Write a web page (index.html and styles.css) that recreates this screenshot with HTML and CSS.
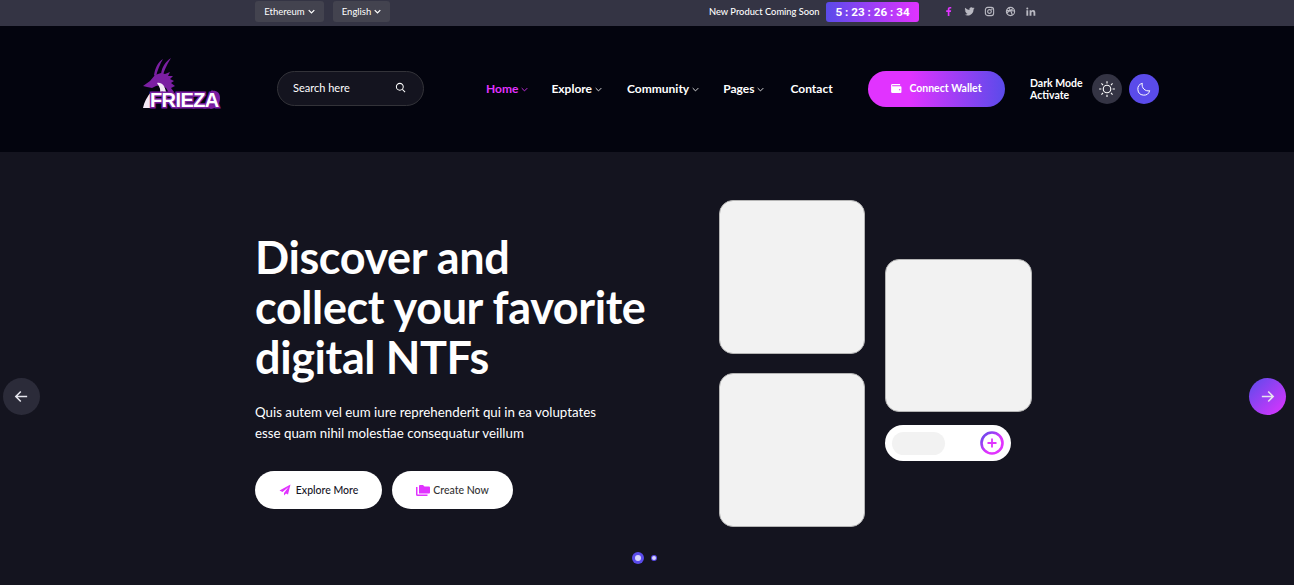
FILE: index.html
```html
<!DOCTYPE html>
<html lang="en">
<head>
<meta charset="utf-8">
<title>Frieza NFT</title>
<link rel="stylesheet" href="styles.css">
</head>
<body>
<div class="topbar">
  <div class="top-left">
    <button class="select select-eth">Ethereum <svg class="chev" viewBox="0 0 10 6"><path d="M1 1l4 4 4-4"/></svg></button>
    <button class="select select-en">English <svg class="chev" viewBox="0 0 10 6"><path d="M1 1l4 4 4-4"/></svg></button>
  </div>
  <div class="top-right">
    <span class="soon">New Product Coming Soon</span>
    <span class="timer">5 : 23 : 26 : 34</span>
    <div class="socials">
      <svg class="soc soc-fb" viewBox="0 0 24 24"><path d="M14 22v-9h3.200l.6-3.700H14V7c0-1.100.4-1.800 1.900-1.800H18V2.100C17.600 2 16.400 2 15.200 2 12.400 2 10.400 3.700 10.400 6.700v2.600H7V13h3.400v9z"/></svg>
      <svg class="soc" viewBox="0 0 24 24"><path d="M23 5c-.8.400-1.700.6-2.600.7.900-.6 1.600-1.400 2-2.500-.9.500-1.800.9-2.900 1.100A4.500 4.500 0 0 0 11.800 8.500 12.800 12.800 0 0 1 2.500 3.800a4.500 4.500 0 0 0 1.400 6c-.7 0-1.400-.2-2-.6 0 2.200 1.500 4 3.600 4.500-.7.200-1.400.2-2 .1.600 1.800 2.200 3.100 4.200 3.100A9 9 0 0 1 1 18.800 12.800 12.800 0 0 0 20.700 7.500c.9-.6 1.700-1.500 2.300-2.500z"/></svg>
      <svg class="soc soc-line" viewBox="0 0 24 24"><rect x="3" y="3" width="18" height="18" rx="5"/><circle cx="12" cy="12" r="4"/><circle cx="17" cy="7" r=".6"/></svg>
      <svg class="soc soc-line" viewBox="0 0 24 24"><circle cx="12" cy="12" r="9"/><path d="M8 4c4 4 7 10 8 16M3.500 10c6 .5 11-1 15-5M4 16c3-5 9-7 16.500-5"/></svg>
      <svg class="soc" viewBox="0 0 24 24"><path d="M3 9h4v12H3zM5 3a2.200 2.200 0 1 1 0 4.400A2.200 2.200 0 0 1 5 3zM10 9h3.800v1.700c.6-1 1.900-2 3.900-2 4 0 4.800 2.600 4.800 6V21h-4v-5.500c0-1.400 0-3.200-2-3.200s-2.400 1.500-2.400 3.100V21H10z"/></svg>
    </div>
  </div>
</div>

<header class="header">
  <a class="logo" href="#" aria-label="Frieza">
    <svg class="logo-art" viewBox="0 0 80 52">
      <path class="logo-white" d="M1 50c1-6 4-11 8-16l3 3-2 13z"/>
      <path class="logo-purple" d="M21 1c-5 3-8 9-9 16l2 2c1-6 4-13 7-18zM29 0c-6 4-9 9-10 16l2 2c1-6 5-13 8-18z"/>
      <path class="logo-purple" d="M1 28l7-5 5-6 6-2 4 1 5-2-2 4 5 0-3 3 4 2-3 2 4 3-4 2 3 4-5 1-3-5-5-3-5 1-4 2-5-1z"/>
      <path class="logo-white" d="M15 25c5-1 8 3 9 9l-6 1c1-4-1-7-3-10z"/>
      <path class="logo-purple" d="M69 33c5-1 9 1 9 7s-3 10-9 11l-3-1z"/>
      <path class="logo-dark" d="M72 36l2 1-3 10-2-1z"/>
    </svg>
    <span class="logo-text">FRIEZA</span>
  </a>
  <div class="search">
    <span class="search-text">Search here</span>
    <svg class="search-icon" viewBox="0 0 24 24"><circle cx="10.500" cy="10.500" r="7.500"/><path d="M16 16l6 6"/></svg>
  </div>
  <nav class="nav">
    <a class="nav-link nav-home active" href="#">Home <svg class="nav-chev" viewBox="0 0 10 6"><path d="M1 1l4 4 4-4"/></svg></a>
    <a class="nav-link nav-explore" href="#">Explore <svg class="nav-chev" viewBox="0 0 10 6"><path d="M1 1l4 4 4-4"/></svg></a>
    <a class="nav-link" href="#">Community <svg class="nav-chev" viewBox="0 0 10 6"><path d="M1 1l4 4 4-4"/></svg></a>
    <a class="nav-link nav-pages" href="#">Pages <svg class="nav-chev" viewBox="0 0 10 6"><path d="M1 1l4 4 4-4"/></svg></a>
    <a class="nav-link" href="#">Contact</a>
  </nav>
  <a class="wallet" href="#">
    <svg class="wallet-icon" viewBox="0 0 24 20"><path d="M3 0h17v3H3a1 1 0 0 0 0 2h18a2 2 0 0 1 2 2v11a2 2 0 0 1-2 2H3a3 3 0 0 1-3-3V3a3 3 0 0 1 3-3zm16 11a1.500 1.500 0 1 0 0 3 1.500 1.500 0 0 0 0-3z"/></svg>
    Connect Wallet
  </a>
  <div class="mode">
    <span class="mode-text">Dark Mode<br>Activate</span>
    <span class="mode-btn mode-sun">
      <svg viewBox="0 0 24 24"><circle cx="12" cy="12" r="5"/><path d="M12 1.500v3M12 19.500v3M1.500 12h3M19.500 12h3M4.600 4.600l2.100 2.100M17.300 17.300l2.100 2.100M4.600 19.400l2.100-2.100M17.300 6.700l2.100-2.100"/></svg>
    </span>
    <span class="mode-btn mode-moon">
      <svg viewBox="0 0 24 24"><path d="M20.500 14.500A9 9 0 0 1 9.500 3.500a9 9 0 1 0 11 11z"/></svg>
    </span>
  </div>
</header>

<main class="hero">
  <div class="hero-copy">
    <h1 class="title">Discover and<br>collect your favorite<br>digital NTFs</h1>
    <p class="lead">Quis autem vel eum iure reprehenderit qui in ea voluptates<br>esse quam nihil molestiae consequatur veillum</p>
    <div class="actions">
      <a class="btn btn-explore" href="#">
        <svg class="btn-icon" viewBox="0 0 24 24"><path d="M23 1L1 13l6 3 12-10-9 12v5l4-4 4 2z"/></svg>
        Explore More
      </a>
      <a class="btn btn-create" href="#">
        <svg class="btn-icon btn-icon-wide" viewBox="0 0 28 22"><path d="M6 2a2 2 0 0 1 2-2h6l3 3h9a2 2 0 0 1 2 2v10a2 2 0 0 1-2 2H6z"/><path d="M3 4v15h20v3H3a3 3 0 0 1-3-3V4z"/></svg>
        Create Now
      </a>
    </div>
  </div>
  <div class="gallery">
    <div class="gallery-col">
      <div class="card"></div>
      <div class="card"></div>
    </div>
    <div class="gallery-col gallery-col-right">
      <div class="card card-right"></div>
      <div class="bid">
        <span class="bid-chip"></span>
        <span class="bid-plus">
          <svg viewBox="0 0 24 24"><defs><linearGradient id="ring" x1="0" y1="0" x2="1" y2="1"><stop offset="0" stop-color="#5a4bea"/><stop offset=".6" stop-color="#e133ff"/></linearGradient></defs><circle cx="12" cy="12" r="10.500" fill="none" stroke="url(#ring)" stroke-width="2.600"/><path d="M12 7.500v9M7.500 12h9" fill="none" stroke="#e133ff" stroke-width="1.800"/></svg>
        </span>
      </div>
    </div>
  </div>
  <button class="arrow arrow-prev" aria-label="Previous"><svg viewBox="0 0 24 24"><path d="M20 12H5M11 5l-7 7 7 7"/></svg></button>
  <button class="arrow arrow-next" aria-label="Next"><svg viewBox="0 0 24 24"><path d="M4 12h15M13 5l7 7-7 7"/></svg></button>
  <div class="dots"><span class="dot dot-on"></span><span class="dot"></span></div>
</main>
</body>
</html>
```

FILE: styles.css
```css
* { box-sizing: border-box; }
html, body { margin: 0; padding: 0; }
body {
  width: 1294px;
  height: 585px;
  overflow: hidden;
  background: #14141f;
  color: #fff;
  font-family: Lato, "Noto Sans", sans-serif;
}
a { color: inherit; text-decoration: none; }
button { font-family: inherit; border: 0; padding: 0; }
svg { display: block; }

/* Top bar */
.topbar {
  height: 26px;
  padding-left: 255px;
  background: #343444;
  display: flex;
  align-items: center;
}
.top-left { display: flex; gap: 9px; width: 454px; padding-bottom: 4px; padding-top: 1px; }
.select {
  height: 21px;
  background: #43434f;
  color: #fff;
  font-size: 9.500px;
  border-radius: 3px;
  display: flex;
  align-items: center;
  justify-content: center;
  gap: 3px;
}
.select-eth { width: 69px; }
.select-en { width: 57px; }
.chev { width: 7px; height: 5px; }
.chev path { fill: none; stroke: #fff; stroke-width: 1.800; }
.top-right { display: flex; align-items: center; padding-bottom: 3px; }
.soon { font-size: 9.300px; width: 117px; white-space: nowrap; font-weight: 500; }
.timer {
  width: 93px;
  height: 20px;
  border-radius: 3px;
  background: linear-gradient(90deg, #5a4bea, #e133ff);
  font-family: Roboto, sans-serif;
  font-size: 11.700px;
  font-weight: 700;
  display: flex;
  align-items: center;
  justify-content: center;
  white-space: nowrap;
}
.socials { display: flex; align-items: center; gap: 9.500px; margin-left: 24px; }
.soc { width: 11px; height: 11px; fill: #b9b9c2; }
.soc-fb { fill: #e133ff; }
.soc-line { fill: none; stroke: #b9b9c2; stroke-width: 2.400; }

/* Header */
.header {
  height: 126px;
  background: #03040e;
  padding-left: 142px;
  display: flex;
  align-items: center;
}
.logo { position: relative; width: 80px; height: 52px; margin-right: 55px; margin-top: -11px; flex: none; }
.logo-art { width: 80px; height: 52px; }
.logo-purple { fill: #7b1fa2; }
.logo-white { fill: #f3e9f6; }
.logo-dark { fill: #03040e; }
.logo-text {
  position: absolute;
  left: 8px;
  bottom: 1px;
  font-family: "Liberation Sans", sans-serif;
  font-weight: 700;
  font-size: 20px;
  line-height: 17px;
  letter-spacing: -.6px;
  color: #fff;
  -webkit-text-stroke: 3px #7b1fa2;
  paint-order: stroke fill;
}
.search {
  width: 147px;
  height: 35px;
  border: 1px solid #333339;
  border-radius: 18px;
  background: #14141f;
  display: flex;
  align-items: center;
  justify-content: space-between;
  padding: 0 17px 3px 15px;
  margin-right: 62px;
  margin-top: -1px;
  flex: none;
}
.search-text { font-size: 11px; white-space: nowrap; }
.search-icon { width: 11px; height: 11px; fill: none; stroke: #fff; stroke-width: 2.200; }
.nav { display: flex; width: 382px; gap: 24px; align-items: center; margin-top: -1px; flex: none; }
.nav-link {
  display: flex;
  align-items: center;
  gap: 3px;
  font-size: 12px;
  font-weight: 700;
  white-space: nowrap;
}
.nav-link.active { color: #e133ff; }
.nav-home { margin-right: -1px; }
.nav-explore { margin-right: 1px; }
.nav-pages { margin-right: 2px; }
.nav-chev { width: 7px; height: 5px; margin-top: 2px; }
.nav-chev path { fill: none; stroke: currentColor; stroke-width: 1.200; }
.wallet {
  width: 137px;
  height: 36px;
  border-radius: 18px;
  background: linear-gradient(90deg, #e133ff 30%, #5a4bea 100%);
  display: flex;
  align-items: center;
  justify-content: center;
  gap: 7px;
  padding-bottom: 2px;
  font-size: 10.500px;
  font-weight: 700;
  margin-right: 25px;
  flex: none;
}
.wallet-icon { width: 11px; height: 9px; fill: #fff; }
.mode { display: flex; align-items: center; flex: none; }
.mode-text { width: 62px; font-size: 10.500px; line-height: 12px; font-weight: 700; white-space: nowrap; }
.mode-btn {
  width: 30px;
  height: 30px;
  border-radius: 50%;
  display: flex;
  align-items: center;
  justify-content: center;
}
.mode-sun { background: #343444; margin-right: 7px; }
.mode-moon { background: #5a4bea; }
.mode-btn svg { width: 16px; height: 16px; fill: none; stroke: #fff; stroke-width: 1.500; }
.mode-sun svg { width: 18px; height: 18px; }

/* Hero */
.hero {
  position: relative;
  height: 433px;
  padding-left: 255px;
  display: flex;
  background: #14141f;
}
.hero-copy { width: 464px; padding-top: 80px; flex: none; }
.title {
  margin: 0;
  font-size: 45px;
  line-height: 50px;
  font-weight: 700;
  letter-spacing: -.4px;
  white-space: nowrap;
}
.lead {
  margin: 20px 0 0;
  font-size: 13.300px;
  line-height: 21px;
  white-space: nowrap;
}
.actions { display: flex; gap: 10px; margin-top: 27px; }
.btn {
  height: 38px;
  border-radius: 19px;
  background: #fff;
  color: #14141f;
  display: flex;
  align-items: center;
  justify-content: center;
  gap: 5px;
  font-size: 10.500px;
  font-weight: 500;
  white-space: nowrap;
}
.btn-explore { width: 127px; }
.btn-create { width: 121px; color: #333; gap: 3px; }
.btn-icon { width: 12px; height: 12px; fill: #e133ff; }
.btn-icon-wide { width: 14px; height: 11px; }
.gallery { display: flex; gap: 20px; padding-top: 48px; flex: none; }
.gallery-col { display: flex; flex-direction: column; gap: 19px; width: 146px; }
.gallery-col-right { width: 147px; padding-top: 59px; gap: 13px; }
.card {
  height: 154px;
  background: #f2f2f2;
  border: 1px solid #b5b5b5;
  border-radius: 14px;
}
.card-right { height: 153px; }
.bid {
  width: 126px;
  height: 36px;
  border-radius: 18px;
  background: #fff;
  display: flex;
  align-items: center;
  justify-content: space-between;
  padding: 0 7px;
}
.bid-chip { width: 53px; height: 23px; border-radius: 12px; background: #f2f2f2; }
.bid-plus svg { width: 24px; height: 24px; }
.arrow {
  position: absolute;
  top: 226px;
  width: 37px;
  height: 37px;
  border-radius: 50%;
  display: flex;
  align-items: center;
  justify-content: center;
}
.arrow svg { width: 17px; height: 17px; fill: none; stroke: #e6e6ee; stroke-width: 2.200; }
.arrow-prev { left: 3px; background: #2b2b39; }
.arrow-next { left: 1249px; background: linear-gradient(135deg, #5a4bea, #e133ff); }
.dots {
  position: absolute;
  top: 400px;
  left: 632px;
  display: flex;
  align-items: center;
  gap: 11px;
}
.dot { width: 4px; height: 4px; border-radius: 50%; background: #d8d4fb; box-shadow: 0 0 0 1px #5a4bea; }
.dot-on { width: 6px; height: 6px; box-shadow: 0 0 0 3px #5a4bea; margin: 3px 0 3px 3px; }
```
